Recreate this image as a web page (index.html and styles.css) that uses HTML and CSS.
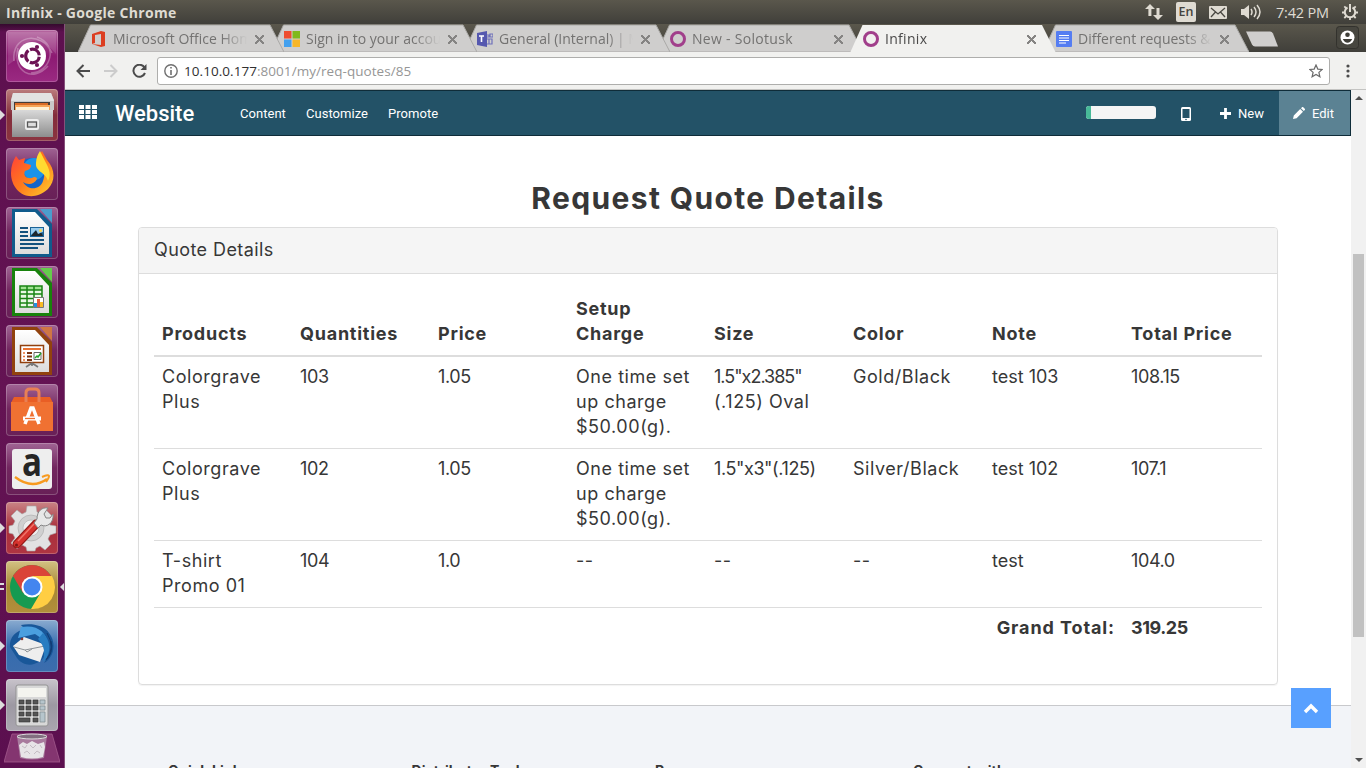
FILE: index.html
```html
<!DOCTYPE html>
<html lang="en">
<head>
<meta charset="utf-8">
<title>Infinix</title>
<link rel="stylesheet" href="styles.css">
</head>
<body>
<svg width="0" height="0" class="defs">
  <defs>
    <linearGradient id="metal" x1="0" y1="0" x2="0" y2="1"><stop offset="0" stop-color="#d9d9d9"/><stop offset="1" stop-color="#8d8d8d"/></linearGradient>
    <linearGradient id="paper" x1="0" y1="0" x2="0" y2="1"><stop offset="0" stop-color="#fff"/><stop offset="1" stop-color="#dcdcdc"/></linearGradient>
    <linearGradient id="flame" x1="0" y1="0" x2="1" y2="1"><stop offset="0" stop-color="#ff3b3b"/><stop offset=".5" stop-color="#ff7a1c"/><stop offset="1" stop-color="#ffd22e"/></linearGradient>
  </defs>
</svg>
<header class="panel">
  <span class="panel-title">Infinix - Google Chrome</span>
  <div class="tray">
    <svg width="18" height="16" viewBox="0 0 18 16" fill="#dfdbd2"><path d="M5 0L0 5h3.400v7h3V5H10zM13 16l-5-5h3.500V4h3v7H18z"/></svg>
    <span class="lang">En</span>
    <svg width="18" height="13" viewBox="0 0 18 13"><rect width="18" height="13" rx="1" fill="#dfdbd2"/><path d="M2 2l7 6 7-6M2 11l4.500-5M16 11l-4.500-5" fill="none" stroke="#4a4842" stroke-width="1.300"/></svg>
    <svg width="21" height="16" viewBox="0 0 21 16"><path d="M0 5h3l5-4v14l-5-4H0z" fill="#dfdbd2"/><path d="M10 5q2 3 0 6M13 3q4 5 0 10M16 1q6 7 0 14" fill="none" stroke="#dfdbd2" stroke-width="1.500"/></svg>
    <span class="clock">7:42 PM</span>
    <svg width="16" height="16" viewBox="0 0 16 16" fill="none" stroke="#dfdbd2"><path d="M5.500 3.500A5.200 5.200 0 1 0 10.500 3.500" stroke-width="2"/><path d="M8 0v8" stroke-width="2"/><path d="M2.300 2.300l2 2M13.700 2.300l-2 2M0 8.500h3M16 8.500h-3M2.300 14l2-2M13.700 14l-2-2M8 16v-3" stroke-width="1.800"/></svg>
  </div>
</header>
<div class="desktop">
  <aside class="launcher">
    <div class="tile dash"><svg viewBox="0 0 52 52"><g fill="none" stroke="#fff" stroke-opacity=".28" stroke-width="1.500"><path d="M8 31C5 5 35 0 46 23M31 7c22 8 14 35-6 36M42 36c-15 17-36 6-30-18"/></g><path d="M2 2h48v22C32 2 17 9 9 30L2 35z" fill="#fff" opacity=".13"/><circle cx="26" cy="26" r="14" fill="#fff"/><circle cx="26.500" cy="26" r="6.800" fill="none" stroke="#6c1254" stroke-width="3.200" stroke-dasharray="12.500 1.740" stroke-dashoffset="-.8"/><circle cx="16" cy="26" r="2.100" fill="#6c1254"/><circle cx="31" cy="17" r="2.100" fill="#6c1254"/><circle cx="31" cy="35" r="2.100" fill="#6c1254"/></svg></div>
    <div class="tile files"><i class="pip"></i><svg viewBox="0 0 52 52"><path d="M7 4h38l3 7v10H5V11z" fill="#c9c9c9"/><path d="M7 4h38l3 8H5z" fill="#e2e2e2"/><path d="M8 13h36v10H8z" fill="#443b38"/><path d="M9 14h33v8H9z" fill="#d96b27"/><path d="M9 16h35v6H9z" fill="#f6a458"/><path d="M10 18h33v3H10z" fill="#fff0d4"/><path d="M6 21h41v27H6z" fill="url(#metal)"/><rect x="19" y="30" width="14" height="11" rx="2" fill="#eee"/><rect x="21.500" y="33" width="9" height="5" fill="#ddd" stroke="#555" stroke-width="1.300"/></svg></div>
    <div class="tile"><svg viewBox="0 0 52 52"><circle cx="27" cy="28" r="18" fill="#1565c9"/><circle cx="28" cy="21" r="11" fill="#1b93e8"/><path d="M5 25C5 18 7 13 10 8l3 4 6-2-1 5 7 2c0 4-3 5-6 6-2 4 1 8 7 7 2-2 5-1 5 1-3 6-10 6-14 3 5 9 17 8 20-1 3-8 0-13-4-17-1-5 0-9 3-13l5 9c8 9 9 20 1 29C24 57 5 44 5 25z" fill="url(#flame)"/><path d="M34 3l5 10c5 9 6 14 3 20-2-9-13-9-12-18 0-5 2-9 4-12z" fill="#ffdb31"/></svg></div>
    <div class="tile"><svg viewBox="0 0 52 52"><path d="M6 2h25l15 15v33H6z" fill="#105b8c"/><path d="M34 2h12v14z" fill="#4b9dcc"/><path d="M9 5h20l14 15v27H9z" fill="url(#paper)"/><path d="M14 21h8M14 25h8M14 29h8M14 33h24M14 37h24M14 41h18" stroke="#13527e" stroke-width="2"/><path d="M24 20h14v10H24z" fill="#1b6396"/><path d="M25 29l5-6 3 4 2-2 2 4z" fill="#20282c"/><path d="M25 21h12v4l-3 1-2 1-2-4-5 5z" fill="#99cced"/><circle cx="34.500" cy="23.500" r="1.500" fill="#ffd84b"/></svg></div>
    <div class="tile"><svg viewBox="0 0 52 52"><path d="M6 2h25l15 15v33H6z" fill="#18820c"/><path d="M34 2h12v14z" fill="#65cc4c"/><path d="M9 5h20l14 15v27H9z" fill="url(#paper)"/><path d="M14 20h22v21H14z" fill="#e9f9e5"/><path d="M14 20h22v4H14z" fill="#9fe191"/><path d="M14 20h22v21H14zM14 24h22M14 28h22M14 32.500h22M14 37h22M21 20v21M28 20v21" fill="none" stroke="#198413" stroke-width="1.500"/><path d="M27.500 31.500h10v10h-10z" fill="#fff" stroke="#777"/><path d="M28 37h3v4h-3z" fill="#2491df"/><path d="M31 33h3v8h-3z" fill="#ea5937"/><path d="M34 36h3v5h-3z" fill="#f8bc25"/></svg></div>
    <div class="tile"><svg viewBox="0 0 52 52"><path d="M6 2h25l15 15v33H6z" fill="#91420e"/><path d="M34 2h12v14z" fill="#cf7644"/><path d="M9 5h20l14 15v27H9z" fill="url(#paper)"/><path d="M14.500 20.500h23v17h-23z" fill="#fff" stroke="#92400d" stroke-width="1.500"/><path d="M17 24h18" stroke="#e97232" stroke-width="2"/><path d="M17 28h2M17 31.500h2M17 35h2" stroke="#e97232" stroke-width="1.500"/><path d="M21 28h5M21 31.500h5M21 35h5" stroke="#7b3512" stroke-width="2"/><path d="M28 27.500h7v7h-7z" fill="#fff" stroke="#666"/><path d="M29 33l2-2 1 1 3-4" fill="none" stroke="#25a52b" stroke-width="1.500"/><path d="M26 38v3M26 38l-6 4M26 38l6 4" stroke="#777" stroke-width="1.700"/></svg></div>
    <div class="tile"><svg viewBox="0 0 52 52"><path d="M8 13h36l3 6v28H5V19z" fill="#e95e25"/><path d="M5 18h42v29H5z" fill="#f07132"/><path d="M20 18V9q0-4 4-4h5q4 0 4 4v9" fill="none" stroke="#e88055" stroke-width="3"/><path d="M19 40l6-16h2l6 16" fill="none" stroke="#fff" stroke-width="3.500"/><path d="M17 34.500h18" stroke="#fff" stroke-width="4"/><path d="M19 34.500h10" stroke="#f07132" stroke-width="1.300"/></svg></div>
    <div class="tile"><svg viewBox="0 0 52 52"><rect x="6" y="6" width="40" height="40" rx="3" fill="#eee"/><text x="16" y="33" textLength="20" lengthAdjust="spacingAndGlyphs" class="amazon">a</text><path d="M9 34q17 13 32 2" fill="none" stroke="#f79a20" stroke-width="2.300"/><path d="M36 34q7-3 7-1t-3 6" fill="none" stroke="#f79a20" stroke-width="2"/></svg></div>
    <div class="tile settings"><i class="pip"></i><svg viewBox="0 0 52 52"><g fill="#e2e2e2" stroke="#aaa" stroke-width=".6"><path d="M21 4h9l1 6 4 2 5-4 6 6-4 5 2 4 6 1v7l-6 2-2 4 3 5-6 6-5-4-4 2-1 3h-8l-1-4-4-2-5 4-6-6 4-5-2-4-4-1v-7l4-1 2-4-4-5 6-6 5 4 4-2z"/><circle cx="25" cy="26" r="13" fill="#d0d0d0"/><circle cx="25" cy="26" r="8" fill="#eee"/></g><path d="M11 42L30 22" stroke="#941a18" stroke-width="9" stroke-linecap="round"/><path d="M11 42L30 22" stroke="#d6332e" stroke-width="6.500" stroke-linecap="round"/><path d="M12 39L28 22" stroke="#ef756b" stroke-width="1.500"/><path d="M31 17c0-8 5-12 11-11l-4 6 2 4 4 0 3-4c1 9-6 14-12 11l-3 3-4-5z" fill="#e8e8e8" stroke="#858585"/><circle cx="10.500" cy="43" r="1.500" fill="#7d1514"/></svg></div>
    <div class="tile chrome"><i class="pip double"></i><i class="pip right"></i><svg viewBox="0 0 52 52"><circle cx="26" cy="26" r="22" fill="#169a51"/><path d="M26 26L7 15A22 22 0 0 1 45 15H26z" fill="#da4438"/><path d="M26 15h20A22 22 0 0 1 25 48l10-17z" fill="#ffce43"/><path d="M7 15l10 17 9-17z" fill="#da4438"/><circle cx="26" cy="26" r="10.500" fill="#fff"/><circle cx="26" cy="26" r="8.500" fill="#4385ef"/></svg></div>
    <div class="tile mail"><i class="pip"></i><svg viewBox="0 0 52 52"><path d="M4 27C3 16 12 8 23 10c-3-2-6-2-8-5 10-2 23 0 28 8 8 10 5 25-5 30 3-4 3-8 3-11-6 14-22 17-30 6z" fill="#195799"/><path d="M15 7c17-3 25 6 26 15L29 14 12 18z" fill="#4b9fdf"/><path d="M7 26l11-9 22 8-6 17-21-7z" fill="#eee"/><path d="M8 27l11 3 20-4M19 30l2 2 5-3" fill="none" stroke="#8e9498"/><path d="M37 13c9 9 8 22 0 29 2-10 2-15-5-23z" fill="#287dc1"/><path d="M41 13q9 15-1 27M45 21q3 10-4 18" fill="none" stroke="#113b72"/><circle cx="16" cy="19" r="1.300" fill="#8b3b31"/></svg></div>
    <div class="tile calc"><i class="pip"></i><svg viewBox="0 0 52 52"><rect x="10" y="6" width="32" height="41" rx="2" fill="#d8d8d8" stroke="#939393"/><path d="M12 9h28v9H12z" fill="#f4f4ef"/><g fill="#555" stroke="#333" stroke-width=".6"><path d="M13 21h5v4h-5zM20 21h5v4h-5zM27 21h5v4h-5zM13 27h5v4h-5zM20 27h5v4h-5zM27 27h5v4h-5zM13 33h5v4h-5zM20 33h5v4h-5zM27 33h5v4h-5zM13 39h11v4H13zM27 39h5v4h-5z"/></g><path d="M34 21h5v4h-5zM34 27h5v4h-5zM34 33h5v10h-5z" fill="#b6c5cc" stroke="#80898c" stroke-width=".7"/></svg></div>
    <svg class="trash" viewBox="0 0 56 30"><path d="M8 1h40l8 28H0z" fill="#843570" stroke="#a35a8d" stroke-width=".8"/><path d="M13 3h30l-3 22q-12 3-24 0z" fill="#b898b1" opacity=".7"/><ellipse cx="28" cy="3.500" rx="15" ry="2.500" fill="#826f80" stroke="#ddd"/><path d="M15 12l4-3 4 2 5-3 6 3 6-2 1 5-2 10q-11 3-22 0z" fill="#e7e4e7"/><path d="M18 13l3 2 2-3M26 12l3 3 3-3M36 12l2 3M20 20l3-2 3 3M30 21l3-3 3 2" fill="none" stroke="#c4bcc3"/></svg>
  </aside>
  <main class="browser">
    <div class="tabs">
      <div class="tab t1"><svg class="shape" viewBox="0 0 206 28"><path d="M0 28L12.500 1H192l14 27z"/></svg><svg class="fav" viewBox="0 0 16 16"><path d="M1 3l9-3 4 1v14l-4 1-9-3 9 1V3L4 4v8l-3 1z" fill="#dc3e21"/></svg><span>Microsoft Office Home</span><b></b></div>
      <div class="tab t2"><svg class="shape" viewBox="0 0 206 28"><path d="M0 28L12.500 1H192l14 27z"/></svg><svg class="fav" viewBox="0 0 16 16"><path d="M0 0h7.500v7.500H0z" fill="#ee4e30"/><path d="M8.500 0H16v7.500H8.500z" fill="#80b91c"/><path d="M0 8.500h7.500V16H0z" fill="#43a0ee"/><path d="M8.500 8.500H16V16H8.500z" fill="#f6b629"/></svg><span>Sign in to your account</span><b></b></div>
      <div class="tab t3"><svg class="shape" viewBox="0 0 206 28"><path d="M0 28L12.500 1H192l14 27z"/></svg><svg class="fav" viewBox="0 0 16 16"><path d="M0 2l10-2v16L0 14z" fill="#5558af"/><path d="M2 5h5M4.500 5v6" stroke="#fff" stroke-width="1.600"/><path d="M10 4h2v2h-2M13 3h3v3h-3zM10 8h5v5h-5M12 8v5" fill="none" stroke="#6e70bb" stroke-width="1.200"/></svg><span>General (Internal) | Microsoft</span><b></b></div>
      <div class="tab t4"><svg class="shape" viewBox="0 0 206 28"><path d="M0 28L12.500 1H192l14 27z"/></svg><svg class="fav" viewBox="0 0 16 16"><circle cx="8" cy="8" r="6.500" fill="none" stroke="#a13f8b" stroke-width="3"/></svg><span class="wide">New - Solotusk</span><b></b></div>
      <div class="tab active"><svg class="shape" viewBox="0 0 206 28"><path d="M0 29L12.500 1H192l14 28z"/></svg><svg class="fav" viewBox="0 0 16 16"><circle cx="8" cy="8" r="6.500" fill="none" stroke="#a13f8b" stroke-width="3"/></svg><span class="wide">Infinix</span><b></b></div>
      <div class="tab t6"><svg class="shape" viewBox="0 0 206 28"><path d="M0 28L12.500 1H192l14 27z"/></svg><svg class="fav" viewBox="0 0 16 16"><rect width="16" height="16" rx="1" fill="#557df2"/><path d="M3 4.500h10M3 7h10M3 9.500h10M3 12h7" stroke="#fff" stroke-width="1.200"/></svg><span>Different requests &amp; notes</span><b></b></div>
      <svg class="newtab" width="33" height="16" viewBox="0 0 33 16"><path d="M0 .5h24q2 0 3 2l5 13H9q-2 0-3-2z" fill="#cfcecd"/></svg>
      <svg class="user" width="23" height="23" viewBox="0 0 23 23"><rect x=".5" y=".5" width="22" height="22" rx="3" fill="#47463f" stroke="#33322d"/><circle cx="11.500" cy="11.500" r="7" fill="#fff"/><circle cx="11.500" cy="8.700" r="2.300" fill="#3f3e38"/><path d="M6.800 13h9.400q-1.600 3.700-4.700 3.700T6.800 13z" fill="#3f3e38"/></svg>
    </div>
    <div class="toolbar">
      <svg width="14" height="14" viewBox="0 0 14 14" fill="none" stroke="#4b4b4b" stroke-width="2"><path d="M14 7H2M7.500 1l-6 6 6 6"/></svg>
      <svg width="14" height="14" viewBox="0 0 14 14" fill="none" stroke="#ccc" stroke-width="2"><path d="M0 7h12M6.500 1l6 6-6 6"/></svg>
      <svg width="15" height="14" viewBox="0 0 15 14"><path d="M12.500 3.500A6 6 0 1 0 13 9" fill="none" stroke="#4b4b4b" stroke-width="2"/><path d="M14.500 0v6H8.500z" fill="#4b4b4b"/></svg>
      <div class="omnibox"><svg width="14" height="14" viewBox="0 0 14 14"><circle cx="7" cy="7" r="6.200" fill="none" stroke="#707070" stroke-width="1.400"/><path d="M7 3v1.600M7 6v5" stroke="#707070" stroke-width="1.600"/></svg><span class="url"><em>10.10.0.177</em>:8001/my/req-quotes/85</span><svg width="14" height="14" viewBox="0 0 14 14"><path d="M7 1l1.800 4.100 4.400.4-3.300 2.900 1 4.400L7 10.500l-3.900 2.300 1-4.400L.8 5.500l4.400-.4z" fill="none" stroke="#6a6a6a" stroke-width="1.200"/></svg></div>
      <svg class="dots" width="4" height="14" viewBox="0 0 4 14" fill="#4b4b4b"><circle cx="2" cy="2" r="1.600"/><circle cx="2" cy="7" r="1.600"/><circle cx="2" cy="12" r="1.600"/></svg>
    </div>
    <div class="view">
      <div class="page">
        <nav class="odoo">
          <svg class="apps" width="18" height="14" viewBox="0 0 18 14" fill="#fff"><path d="M0 0h5v4H0zM6.500 0h5v4h-5zM13 0h5v4h-5zM0 5h5v4H0zM6.500 5h5v4h-5zM13 5h5v4h-5zM0 10h5v4H0zM6.500 10h5v4h-5zM13 10h5v4h-5z"/></svg>
          <span class="brand">Website</span>
          <div class="menu"><span>Content</span><span>Customize</span><span>Promote</span></div>
          <div class="progress"><i></i></div>
          <svg class="phone" width="10" height="14" viewBox="0 0 10 14"><rect width="10" height="14" rx="1.500" fill="#fff"/><path d="M1.500 2h7v9h-7z" fill="#235267"/><circle cx="5" cy="12.500" r=".8" fill="#235267"/></svg>
          <svg width="11" height="11" viewBox="0 0 11 11"><path d="M5.500 0v11M0 5.500h11" stroke="#fff" stroke-width="2.800"/></svg>
          <span class="new">New</span>
          <div class="edit"><svg width="12" height="12" viewBox="0 0 12 12"><path d="M0 12l.8-3.600L7.200 2 10 4.800 3.600 11.200zM8 1.200L9.200 0q.4-.3.800 0l2 2q.3.400 0 .8L10.800 4z" fill="#fff"/></svg><span>Edit</span></div>
        </nav>
        <h1>Request Quote Details</h1>
        <section class="card">
          <div class="card-head">Quote Details</div>
          <div class="card-body">
            <table>
              <colgroup><col span="4" class="narrow"><col span="4" class="broad"></colgroup>
              <thead><tr><th>Products</th><th>Quantities</th><th>Price</th><th>Setup<br>Charge</th><th>Size</th><th>Color</th><th>Note</th><th>Total Price</th></tr></thead>
              <tbody>
                <tr><td>Colorgrave<br>Plus</td><td class="num">103</td><td class="num">1.05</td><td>One time set<br>up charge<br>$50.00(g).</td><td><span class="dense">1.5"x2.385"</span><br>(.125) Oval</td><td>Gold/Black</td><td class="note">test 103</td><td class="num">108.15</td></tr>
                <tr><td>Colorgrave<br>Plus</td><td class="num">102</td><td class="num">1.05</td><td>One time set<br>up charge<br>$50.00(g).</td><td class="num">1.5"x3"(.125)</td><td>Silver/Black</td><td class="note">test 102</td><td class="num">107.1</td></tr>
                <tr><td>T-shirt<br>Promo 01</td><td class="num">104</td><td class="num">1.0</td><td>--</td><td>--</td><td>--</td><td class="note">test</td><td class="num">104.0</td></tr>
                <tr class="total"><td colspan="7">Grand Total:</td><td>319.25</td></tr>
              </tbody>
            </table>
          </div>
        </section>
        <footer><span>Quick Links</span><span>Distributor Tools</span><span>Resources</span><span>Connect with</span></footer>
        <div class="to-top"><svg width="16" height="11" viewBox="0 0 16 11"><path d="M2 9l6-6 6 6" fill="none" stroke="#fff" stroke-width="3.400"/></svg></div>
      </div>
      <div class="scrollbar"><i class="up"></i><i class="thumb"></i><i class="down"></i></div>
    </div>
  </main>
</div>
</body>
</html>
```
FILE: styles.css
```css
* { box-sizing: border-box; }
body { margin: 0; width: 1366px; height: 768px; overflow: hidden; display: flex; flex-direction: column; font-family: "Open Sans", "Noto Sans", sans-serif; background: #fff; }
svg { display: block; flex: none; }
.defs { position: absolute; }

.panel { height: 24px; flex: none; display: flex; align-items: center; justify-content: space-between; padding: 0 8px 0 6px; background: linear-gradient(#5a574c, #403f3a); color: #dfdbd2; }
.panel-title { font-size: 14px; font-weight: 700; letter-spacing: .3px; white-space: nowrap; }
.tray { display: flex; align-items: center; }
.tray > :nth-child(2) { margin-left: 13px; }
.tray > :nth-child(3) { margin-left: 13px; }
.tray > :nth-child(4) { margin-left: 14px; }
.tray > :nth-child(6) { margin-left: 12px; }
.lang { width: 20px; height: 20px; border-radius: 2px; background: #dfdbd2; color: #45433d; font-size: 12.5px; line-height: 20px; text-align: center; font-weight: 600; }
.clock { margin-left: 14px; width: 54px; font-size: 14.5px; letter-spacing: -.2px; white-space: nowrap; }

.desktop { flex: 1; display: flex; min-height: 0; }
.launcher { width: 65px; flex: none; display: flex; flex-direction: column; align-items: center; gap: 7px; padding: 6px 1px 0 0; background: linear-gradient(#350a2e, #5d104f 8px, #641353 50%, #5b0f4f); border-right: 1px solid #85507a; overflow: hidden; }
.tile { position: relative; width: 52px; height: 52px; flex: none; border-radius: 4px; background: linear-gradient(#a06494, #72265f 48%, #682057); box-shadow: inset 0 0 0 1px rgba(255,255,255,.22); }
.tile svg { width: 52px; height: 52px; }
.dash { background: linear-gradient(#b567a0, #8c1a72 50%, #9b2a82); }
.files { background: linear-gradient(#bb7c7d, #832d3b 50%, #8b3440); }
.settings { background: linear-gradient(#c98486, #a92f3b 50%, #af3542); }
.chrome { background: linear-gradient(#d3c183, #a78834 50%, #b28e3b); }
.mail { background: linear-gradient(#8aabd0, #356cae 50%, #3c6dad); }
.calc { background: linear-gradient(#c8c3cb, #9d99a3 50%, #aaa6af); }
.amazon { font: 700 39px "Open Sans", sans-serif; fill: #252525; }
.pip { position: absolute; left: -6px; top: 21px; border: 5px solid transparent; border-left-color: #ddd; border-right: 0; }
.pip.double { top: 22px; width: 4px; height: 7px; border: 0; border-top: 2px solid #ddd; border-bottom: 2px solid #ddd; }
.pip.right { left: auto; right: -7px; border: 5px solid transparent; border-right-color: #ddd; border-left: 0; }
.trash { width: 56px; height: 30px; margin-top: -5px; }

.browser { flex: 1; display: flex; flex-direction: column; min-width: 0; }
.tabs { height: 28px; flex: none; display: flex; padding-left: 13px; background: linear-gradient(#5a574c, #403f3a); }
.tab { position: relative; width: 206px; height: 28px; flex: none; margin-right: -13px; display: flex; align-items: center; padding: 2px 17px 0 13px; font-size: 14px; letter-spacing: 0; color: #737271; }
.tab > * { position: relative; }
.tab .shape { position: absolute; left: 0; top: 0; width: 206px; height: 28px; fill: #cfcecd; stroke: #aaa9a7; stroke-width: 1; overflow: hidden; }
.tab .fav { width: 16px; height: 16px; }
.tab span { width: 136px; height: 22px; line-height: 21px; margin-left: 6px; white-space: nowrap; overflow: hidden; -webkit-mask-image: linear-gradient(90deg, #000 108px, transparent 134px); mask-image: linear-gradient(90deg, #000 108px, transparent 134px); }
.tab .wide { letter-spacing: .3px; }
.tab b { width: 9px; height: 9px; margin-left: 6px; background: linear-gradient(45deg, transparent 43%, #858483 43%, #858483 57%, transparent 57%), linear-gradient(-45deg, transparent 43%, #858483 43%, #858483 57%, transparent 57%); }
.t1 { z-index: 5; } .t2 { z-index: 4; } .t3 { z-index: 3; } .t4 { z-index: 2; } .t6 { z-index: 1; }
.tab.active { z-index: 9; color: #4a4949; }
.tab.active .shape { fill: #f1f1ef; stroke: none; }
.newtab { margin: 7px 0 0 10px; }
.user { margin: 2px 0 0 57px; }

.toolbar { height: 38px; flex: none; display: flex; align-items: center; background: #f1f1ef; border-bottom: 1px solid #c4c4c2; padding: 0 0 0 11px; }
.toolbar > svg + svg { margin-left: 14px; }
.omnibox { width: 1173px; height: 28px; margin-left: 10px; display: flex; align-items: center; gap: 6px; padding: 0 6px; background: #fff; border: 1px solid #aeaeac; border-radius: 3px; }
.url { flex: 1; font-size: 13.5px; letter-spacing: .05px; color: #969696; }
.url em { font-style: normal; color: #303030; }
.toolbar .dots { margin-left: 16px; }

.view { flex: 1; display: flex; min-height: 0; }
.page { position: relative; width: 1286px; flex: none; overflow: hidden; font-family: Inter, "Open Sans", sans-serif; color: #373737; background: #fff; }
.odoo { height: 46px; display: flex; align-items: center; padding-left: 14px; background: #235267; border: 1px solid #0f2c39; border-left: 0; color: #fff; font-family: Roboto, sans-serif; font-size: 13px; }
.apps { margin-bottom: 2px; }
.brand { font-size: 22px; font-weight: 500; margin-left: 18px; width: 80px; white-space: nowrap; }
.menu { display: flex; gap: 20px; margin-left: 45px; flex: 1; letter-spacing: .04px; }
.progress { width: 70px; height: 13px; margin-bottom: 1px; border-radius: 3px; background: #f5f5f5; overflow: hidden; }
.progress i { display: block; width: 5px; height: 100%; background: #47b998; }
.phone { margin: 2px 29px 0 25px; }
.new { margin-left: 7px; width: 41px; }
.edit { width: 71px; height: 44px; display: flex; align-items: center; gap: 7px; padding-left: 14px; background: #5b8293; }
h1 { margin: 42px 0 0; height: 49px; line-height: 41px; font-size: 30px; font-weight: 700; letter-spacing: 1.37px; text-align: center; }
.card { width: 1140px; height: 458px; margin: 0 0 0 73px; border: 1px solid #ddd; border-radius: 4px; box-shadow: 0 1px 1px rgba(0,0,0,.05); font-size: 18px; line-height: 25px; letter-spacing: .55px; }
.card-head { height: 46px; padding: 9px 15px 11px; background: #f5f5f5; border-bottom: 1px solid #ddd; border-radius: 3px 3px 0 0; letter-spacing: .42px; }
.card-body { padding: 15px; }
table { width: 1108px; table-layout: fixed; border-spacing: 0; }
.narrow { width: 138px; }
.broad { width: 139px; }
th, td { padding: 7px 0 9px 8px; text-align: left; vertical-align: top; white-space: nowrap; }
th { vertical-align: bottom; font-weight: 700; border-bottom: 2px solid #ddd; letter-spacing: .75px; }
tbody tr + tr td { border-top: 1px solid #ddd; }
.num { letter-spacing: -.4px; }
.dense { letter-spacing: -1px; }
.note { letter-spacing: 0; }
.total td { font-weight: 700; letter-spacing: -.45px; }
.total td:first-child { text-align: right; padding-right: 8px; letter-spacing: .9px; }
footer { height: 70px; margin-top: 20px; padding: 54px 0 0 103px; display: flex; background: #f2f4f8; border-top: 1px solid #c8c9cc; font-size: 14px; font-weight: 700; line-height: 22px; letter-spacing: .15px; white-space: nowrap; }
footer span { width: 243.500px; }
footer span:nth-child(3) { width: 258px; }
.to-top { position: absolute; right: 20px; bottom: 40px; width: 40px; height: 40px; background: #58a0ff; display: flex; align-items: center; justify-content: center; }
.scrollbar { flex: 1; display: flex; flex-direction: column; align-items: center; background: #f1f1f1; }
.up { margin-top: 6px; border: 4px solid transparent; border-bottom-color: #505050; border-top: 0; }
.thumb { width: 11px; height: 383px; margin-top: 154px; background: #c1c1c1; }
.down { margin-top: 121px; border: 4px solid transparent; border-top-color: #505050; border-bottom: 0; }
```
